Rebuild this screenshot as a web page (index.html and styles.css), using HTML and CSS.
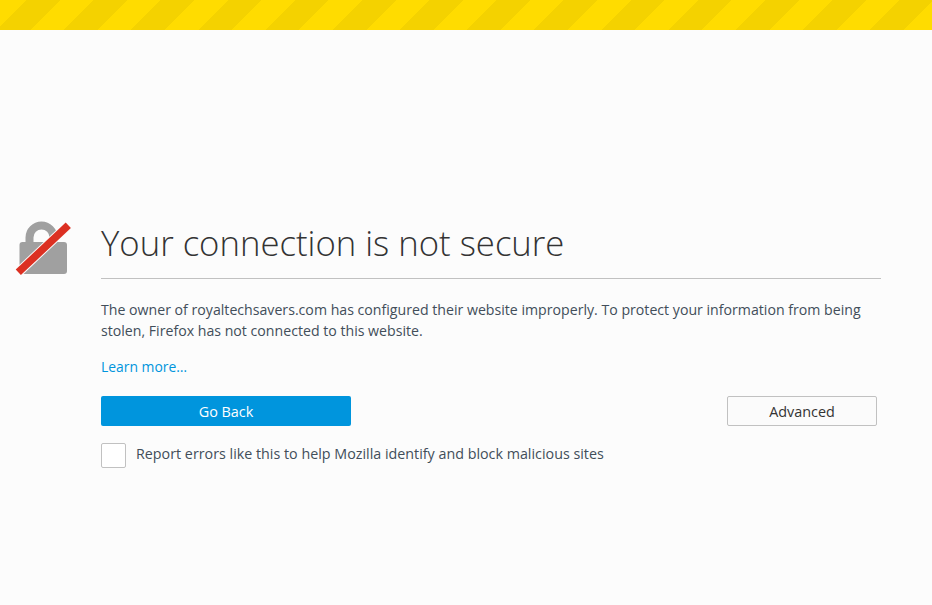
FILE: index.html
```html
<!DOCTYPE html>
<html lang="en">
<head>
<meta charset="utf-8">
<title>Insecure Connection</title>
<link rel="stylesheet" href="styles.css">
</head>
<body>
<div class="stripes"></div>
<main class="page">
  <div class="icon-col">
    <svg class="lock" width="56" height="58" viewBox="0 0 56 58" aria-hidden="true">
      <path d="M14.500 26V18.500a12 12 0 0 1 24 0V26" fill="none" stroke="#a0a0a0" stroke-width="8"/>
      <rect x="4.500" y="23" width="47.500" height="32" rx="3" fill="#a0a0a0"/>
      <path d="M2.600 54L54 5.600" stroke="#fcfcfc" stroke-width="9.500" fill="none"/>
      <path d="M3.300 53.300L53.300 6.300" stroke="#dc3022" stroke-width="7.500" fill="none"/>
    </svg>
  </div>
  <div class="content">
    <h1 class="title">Your connection is not secure</h1>
    <p class="desc">The owner of royaltechsavers.com has configured their website improperly. To protect your information from being stolen, Firefox has not connected to this website.</p>
    <a class="learn" href="#">Learn more…</a>
    <div class="actions">
      <button class="btn primary" type="button">Go Back</button>
      <button class="btn secondary" type="button">Advanced</button>
    </div>
    <label class="report">
      <span class="check"></span>
      <span class="report-text">Report errors like this to help Mozilla identify and block malicious sites</span>
    </label>
  </div>
</main>
</body>
</html>
```

FILE: styles.css
```css
html, body {
  margin: 0;
  height: 100%;
}
body {
  background: #fcfcfc;
  color: #424e5a;
  font-family: "Open Sans", sans-serif;
  font-size: 14px;
  overflow: hidden;
}
.stripes {
  height: 30px;
  background: repeating-linear-gradient(-45deg, #ffdc00 0, #ffdc00 20.21px, #f4d200 20.21px, #f4d200 43.96px, #ffdc00 43.96px, #ffdc00 47.5px);
}
.page {
  display: flex;
  padding-top: 189px;
}
.icon-col {
  width: 101px;
  flex: none;
  padding-left: 15px;
  box-sizing: border-box;
}
.lock {
  display: block;
}
.content {
  width: 780px;
}
.title {
  margin: 0;
  height: 59px;
  border-bottom: 1px solid #c1c1c1;
  font-size: 34.7px;
  font-weight: 300;
  line-height: 47px;
  color: #333;
}
.desc {
  margin: 20px 0 0;
  font-size: 14.15px;
  line-height: 21px;
}
.learn {
  display: block;
  margin-top: 15px;
  font-size: 13.9px;
  line-height: 21px;
  color: #0095dd;
  text-decoration: none;
}
.actions {
  display: flex;
  justify-content: space-between;
  margin-top: 19px;
  padding-right: 4px;
}
.btn {
  height: 30px;
  font: 14.4px "Open Sans", sans-serif;
  border-radius: 2px;
  padding: 0;
}
.primary {
  width: 250px;
  background: #0095dd;
  border: 0;
  color: #fff;
}
.secondary {
  width: 150px;
  background: #fbfbfb;
  border: 1px solid #c1c1c1;
  color: #333;
}
.report {
  display: flex;
  align-items: flex-start;
  gap: 10px;
  margin-top: 17px;
}
.report-text {
  font-size: 14.3px;
  line-height: 21px;
}
.check {
  width: 23px;
  height: 23px;
  background: #fff;
  border: 1px solid #c1c1c1;
  border-radius: 2px;
}
```
